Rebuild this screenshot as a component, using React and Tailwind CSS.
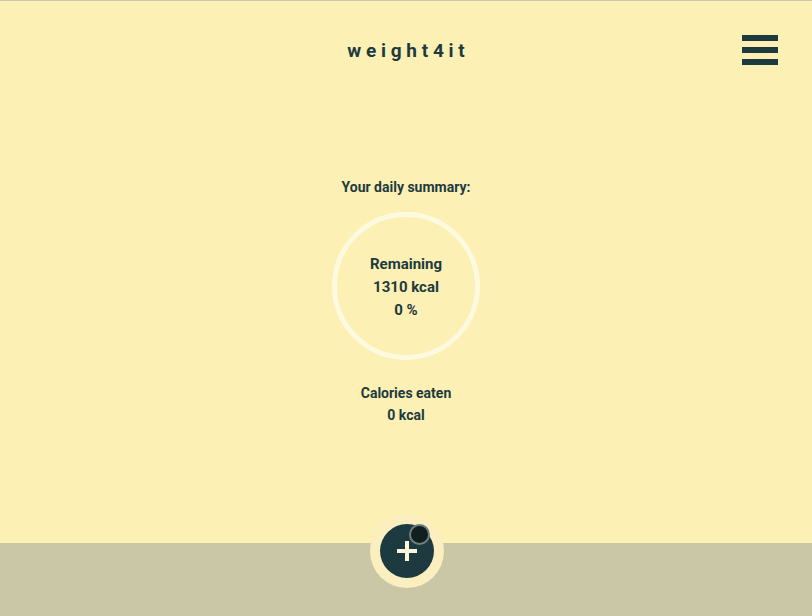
import React from "react";

export default function App() {
  return (
    <div
      className="relative flex h-[616px] w-[812px] flex-col overflow-hidden border-t border-[#c9c6b4] bg-[#fcf0b4] text-[#1d3a3f]"
      style={{ fontFamily: "Roboto, 'Liberation Sans', sans-serif" }}
    >
      <header className="relative flex h-[100px] items-center justify-center">
        <h1 className="pl-[0.25em] text-[19px] font-bold tracking-[0.25em]">weight4it</h1>
        <button className="absolute right-[34px] top-[34px] flex flex-col gap-[6px]" aria-label="menu">
          <span className="block h-[6px] w-[36px] bg-[#1d3a3f]" />
          <span className="block h-[6px] w-[36px] bg-[#1d3a3f]" />
          <span className="block h-[6px] w-[36px] bg-[#1d3a3f]" />
        </button>
      </header>

      <main className="flex flex-1 flex-col items-center pt-[76px]">
        <p className="text-[14px] font-bold">Your daily summary:</p>
        <div className="mt-[14px] flex h-[148px] w-[148px] flex-col items-center justify-center rounded-full border-[5px] border-[#fefae0] pt-[3px] text-[15px] font-bold leading-[23px]">
          <span>Remaining</span>
          <span>1310 kcal</span>
          <span>0 %</span>
        </div>
        <div className="mt-[22px] flex flex-col items-center text-[14px] font-bold leading-[22px]">
          <span>Calories eaten</span>
          <span>0 kcal</span>
        </div>
      </main>

      <footer className="relative h-[73px] bg-[#cac7a6]">
        <div className="absolute left-[370px] top-[-29px] flex h-[74px] w-[74px] items-center justify-center rounded-full bg-[#fbefc0]">
          <button className="relative flex h-[54px] w-[54px] items-center justify-center rounded-full bg-[#1d3a40]" aria-label="add">
            <svg width="24" height="24" viewBox="0 0 24 24" fill="none" stroke="#fdf6dc" strokeWidth="4" strokeLinecap="butt">
              <path d="M12 2v20M2 12h20" />
            </svg>
            <span className="absolute right-[4px] top-[0px] h-[21px] w-[21px] rounded-full border-[2px] border-[#6f7c80] bg-[#10201f]" />
          </button>
        </div>
      </footer>
    </div>
  );
}
